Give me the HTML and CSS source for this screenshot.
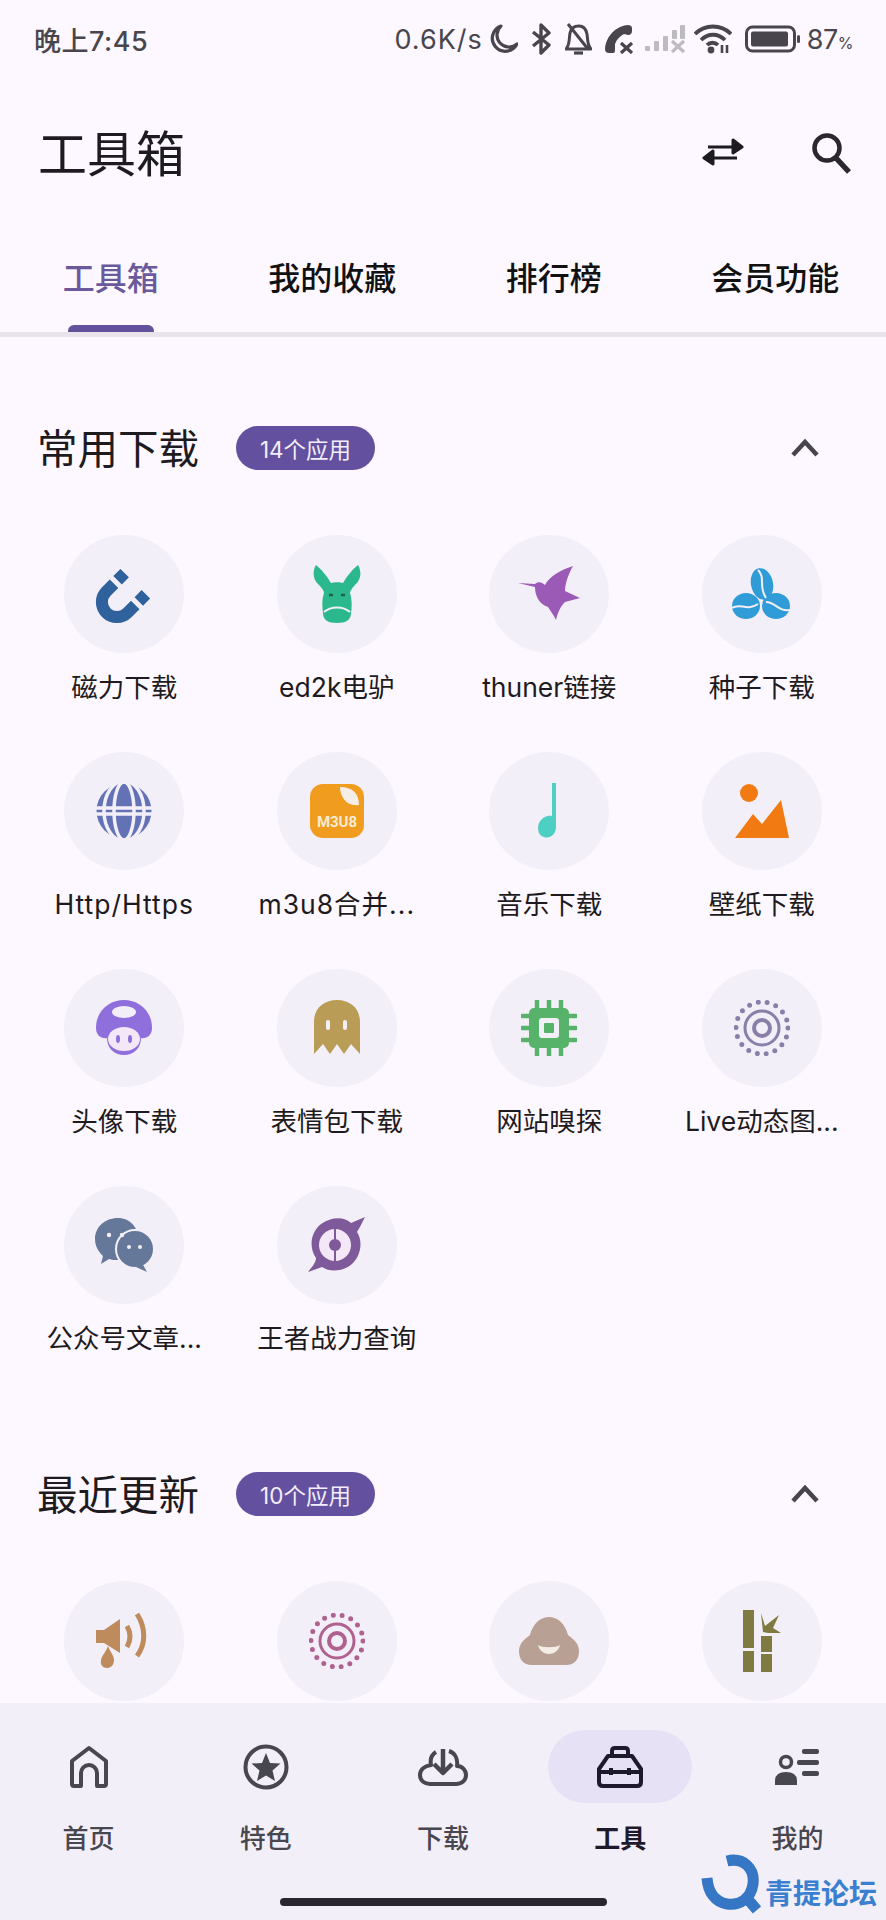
FILE: index.html
```html
<!DOCTYPE html>
<html lang="zh-CN">
<head>
  <meta charset="UTF-8" />
  <meta name="viewport" content="width=device-width, initial-scale=1.0" />
  <title>工具箱</title>
  <link rel="stylesheet" href="styles.css">
</head>
<body>
  <!-- 状态栏 -->
  <div class="status-bar">
    <span class="status-time">晚上7:45</span>
    <div class="status-right">
      <span class="status-speed">0.6K/s</span>
      <svg class="st st-moon" width="28" height="30" viewBox="0 0 28 30"><path d="M11 2A13 13 0 1 0 27 20 A12 12 0 0 1 11 2Z" fill="none" stroke="#48464c" stroke-width="3.200" stroke-linejoin="round"/></svg>
      <svg class="st st-bt" width="20" height="32" viewBox="0 0 20 32"><path d="M2 9L18 22L10 30V2L18 10L2 23" fill="none" stroke="#48464c" stroke-width="3.400" stroke-linejoin="round"/></svg>
      <svg class="st st-bell" width="27" height="32" viewBox="0 0 27 32"><path d="M1 26C5 22 4 15 5 10C6 5 10 3 14 3C18 3 21 6 22 11C23 17 22 22 26 26Z M3 1L23 26" fill="none" stroke="#48464c" stroke-width="3" stroke-linejoin="round"/><path d="M9 30H18" stroke="#48464c" stroke-width="3.200"/></svg>
      <svg class="st st-phone" width="29" height="30" viewBox="0 0 29 30"><path d="M23 1C11 2 1 12 0 25C0 28 2 29 4 29H8C10 29 10 27 10 25L10 20C12 15 15 12 19 10L23 11C26 11 27 9 27 7V4C27 2 25 1 23 1Z" fill="#48464c"/><path d="M16 19L27 29M27 19L16 29" stroke="#48464c" stroke-width="3.200"/></svg>
      <svg class="st st-signal" width="40" height="30" viewBox="0 0 40 30"><g fill="#bdbac0"><rect x="0" y="22" width="5" height="5" rx="1"/><rect x="9" y="17" width="5" height="10" rx="1"/><rect x="18" y="12" width="5" height="15" rx="1"/><rect x="27" y="6" width="5" height="9" rx="1"/><rect x="35" y="1" width="5" height="14" rx="1"/></g><path d="M27 17L39 28M39 17L27 28" stroke="#bdbac0" stroke-width="3.200"/></svg>
      <svg class="st st-wifi" width="38" height="30" viewBox="0 0 38 30"><path d="M1 10C11 0 27 0 37 10M7 16C14 9 24 9 31 16M13 21C16 18 21 18 24 21" fill="none" stroke="#48464c" stroke-width="3.800"/><circle cx="17" cy="26" r="3.400" fill="#48464c"/><path d="M28 21V29M33 21V29" stroke="#48464c" stroke-width="2.600" fill="none"/></svg>
      <svg class="st st-battery" width="55" height="28" viewBox="0 0 55 28"><rect x="1.500" y="2" width="48" height="24" rx="6" fill="none" stroke="#48464c" stroke-width="3"/><rect x="6" y="6.500" width="37" height="15" rx="2" fill="#48464c"/><rect x="52" y="10" width="3" height="8" rx="1.500" fill="#48464c"/></svg>
      <span class="status-batt">87<small>%</small></span>
    </div>
  </div>

  <!-- 标题栏 -->
  <header class="app-bar">
    <h1 class="app-title">工具箱</h1>
    <div class="app-actions">
      <svg width="44" height="40" viewBox="0 0 44 40"><path d="M8 15H32M33 8L42 15L33 21Z M37 26H14M13 19L4 26L13 32Z" fill="#1d1b20" stroke="#1d1b20" stroke-width="3" stroke-linejoin="round" transform="translate(0 -1)"/></svg>
      <svg width="42" height="44" viewBox="0 0 42 44"><circle cx="17" cy="17" r="12.500" fill="none" stroke="#2a2730" stroke-width="4.500"/><path d="M26 27L39 41" stroke="#2a2730" stroke-width="5.500"/></svg>
    </div>
  </header>

  <!-- 顶部标签 -->
  <nav class="tabs">
    <a class="tab active"><span>工具箱</span></a>
    <a class="tab"><span>我的收藏</span></a>
    <a class="tab"><span>排行榜</span></a>
    <a class="tab"><span>会员功能</span></a>
  </nav>

  <main class="content">
    <!-- 常用下载 -->
    <section class="group">
      <div class="group-head">
        <h2>常用下载</h2>
        <span class="badge">14个应用</span>
        <svg class="chevron" width="28" height="18" viewBox="0 0 28 18"><path d="M2 16L14 3L26 16" fill="none" stroke="#47454b" stroke-width="4.500"/></svg>
      </div>
      <div class="app-grid">
        <div class="app">
          <div class="app-icon">
            <svg width="60" height="60" viewBox="0 0 60 60"><g transform="translate(25 36) rotate(45)" fill="none" stroke="#2f619c" stroke-width="12"><path d="M-15 -8V3A15 15 0 0 0 15 3V-8"/><path d="M-15 -23V-13M15 -23V-13"/></g></svg>
          </div>
          <p>磁力下载</p>
        </div>
        <div class="app">
          <div class="app-icon">
            <svg width="48" height="58" viewBox="0 0 48 58"><path d="M3 0C-1 7 0 15 6 20C9 23 11 26 11 28C9 34 9 42 10 48C10 55 15 58 24 58C33 58 38 55 38 48C39 42 39 34 37 28C37 26 39 23 42 20C48 15 49 7 45 0C40 4 34 11 30 18C27 17 21 17 18 18C14 11 8 4 3 0Z" fill="#2bb88c"/><path d="M11 47C18 41 30 41 37 47" fill="none" stroke="#f3eff8" stroke-width="2"/><path d="M16 30H20M28 30H32" stroke="#1d5f4a" stroke-width="2.500"/></svg>
          </div>
          <p>ed2k电驴</p>
        </div>
        <div class="app">
          <div class="app-icon">
            <svg width="62" height="60" viewBox="0 0 62 60"><path d="M0 19L17 20C20 17 24 18 27 21C31 13 42 6 55 2C50 11 47 20 47 27L62 34L47 38C43 42 40 47 38 56C35 50 32 46 30 43C20 40 17 30 17 23Z" fill="#9a5ab5"/></svg>
          </div>
          <p>thuner链接</p>
        </div>
        <div class="app">
          <div class="app-icon">
            <svg width="60" height="60" viewBox="0 0 60 60"><g fill="#2f9cd8"><ellipse cx="30" cy="20" rx="11" ry="16" transform="rotate(-12 30 20)"/><ellipse cx="14" cy="42" rx="14" ry="13"/><ellipse cx="44" cy="42" rx="14" ry="13"/></g><path d="M26 6C34 14 26 22 34 34M0 44C8 38 14 48 26 40M34 38C44 38 46 48 58 46" fill="none" stroke="#f3eff8" stroke-width="2"/></svg>
          </div>
          <p>种子下载</p>
        </div>
        <div class="app">
          <div class="app-icon">
            <svg width="60" height="60" viewBox="0 0 60 60"><circle cx="30" cy="30" r="27.500" fill="#6272b5"/><g fill="none" stroke="#f3eff8" stroke-width="3.500"><path d="M0 27H60M0 33H60"/><ellipse cx="30" cy="30" rx="10" ry="29"/><ellipse cx="30" cy="30" rx="20" ry="30"/></g></svg>
          </div>
          <p class="wide">Http/Https</p>
        </div>
        <div class="app">
          <div class="app-icon">
            <svg width="56" height="56" viewBox="0 0 56 56"><rect x="1" y="1" width="54" height="54" rx="13" fill="#f09c1e"/><path d="M31 4C43 4 50 10 50 22C38 24 31 14 31 4Z" fill="#f5eee6"/><text class="m3u8" x="28" y="44" text-anchor="middle">M3U8</text></svg>
          </div>
          <p class="wide">m3u8合并...</p>
        </div>
        <div class="app">
          <div class="app-icon">
            <svg width="40" height="56" viewBox="0 0 40 56"><path d="M23 0H27V44C27 52 20 56 15 54C9 53 8 45 10 40C13 34 19 32 23 33Z" fill="#4dcfc4"/></svg>
          </div>
          <p>音乐下载</p>
        </div>
        <div class="app">
          <div class="app-icon">
            <svg width="56" height="56" viewBox="0 0 56 56"><ellipse cx="15" cy="10" rx="9" ry="9" fill="#f27a12"/><path d="M1 55L19 31L28 41L47 17L55 55Z" fill="#f27a12"/></svg>
          </div>
          <p>壁纸下载</p>
        </div>
        <div class="app">
          <div class="app-icon">
            <svg width="56" height="56" viewBox="0 0 56 56"><path d="M28 0C14 0 0 10 0 28C0 36 6 39 11 38C11 48 18 55 28 55C38 55 45 48 45 38C50 39 56 36 56 28C56 10 42 0 28 0Z" fill="#8e6fdc"/><ellipse cx="28" cy="12" rx="12" ry="6" fill="#f3eff8"/><ellipse cx="28" cy="39" rx="16" ry="12" fill="#f3e7f8"/><ellipse cx="22" cy="39" rx="2" ry="4" fill="#8e6fdc"/><ellipse cx="34" cy="39" rx="2" ry="4" fill="#8e6fdc"/></svg>
          </div>
          <p>头像下载</p>
        </div>
        <div class="app">
          <div class="app-icon">
            <svg width="46" height="56" viewBox="0 0 46 56"><path d="M0 54V22C0 8 10 0 23 0C36 0 46 8 46 22V54L37 44L30 54L23 44L16 54L9 44Z" fill="#b99c55"/><rect x="12" y="20" width="4" height="10" rx="2" fill="#f3eff8"/><rect x="29" y="20" width="4" height="10" rx="2" fill="#f3eff8"/></svg>
          </div>
          <p>表情包下载</p>
        </div>
        <div class="app">
          <div class="app-icon">
            <svg width="56" height="56" viewBox="0 0 56 56"><rect x="8" y="8" width="40" height="40" rx="5" fill="#58b36a"/><rect x="18" y="18" width="20" height="20" rx="3" fill="#f3eff8"/><rect x="23" y="23" width="10" height="10" rx="1" fill="#58b36a"/><path d="M16 1V8M28 1V8M40 1V8M16 48V55M28 48V55M40 48V55M1 16H8M1 28H8M1 40H8M48 16H55M48 28H55M48 40H55" stroke="#58b36a" stroke-width="4.500" stroke-linecap="round"/></svg>
          </div>
          <p>网站嗅探</p>
        </div>
        <div class="app">
          <div class="app-icon">
            <svg width="56" height="56" viewBox="0 0 56 56" fill="none" stroke="#8a7fa8"><circle cx="28" cy="28" r="26" stroke-width="5" stroke-linecap="round" stroke-dasharray="0 9.070"/><circle cx="28" cy="28" r="17" stroke-width="3"/><circle cx="28" cy="28" r="8" stroke-width="4"/></svg>
          </div>
          <p>Live动态图...</p>
        </div>
        <div class="app">
          <div class="app-icon">
            <svg width="60" height="56" viewBox="0 0 60 56"><path d="M24 1C11 1 1 10 1 22C1 30 5 35 9 39L7 47L15 42C18 43 20 43 24 43C36 43 44 33 44 22C44 10 36 1 24 1Z" fill="#66789a"/><circle cx="41" cy="32" r="19" fill="#66789a" stroke="#f3eff8" stroke-width="2"/><path d="M48 46L53 55L42 50Z" fill="#66789a"/><circle cx="15" cy="18" r="2.200" fill="#f3eff8"/><circle cx="28" cy="18" r="2.200" fill="#f3eff8"/><circle cx="35" cy="30" r="2" fill="#f3eff8"/><circle cx="46" cy="30" r="2" fill="#f3eff8"/></svg>
          </div>
          <p>公众号文章...</p>
        </div>
        <div class="app">
          <div class="app-icon">
            <svg width="60" height="56" viewBox="0 0 60 56"><path d="M58 0C54 8 52 12 50 15C56 24 54 38 46 46C38 54 24 56 15 50L1 55C6 49 9 45 9 41C2 31 3 16 14 7C25 -1 38 0 44 6Z" fill="#7f5a9a"/><circle cx="28" cy="28" r="16" fill="#f3e7f8"/><circle cx="28" cy="28" r="6" fill="#7f5a9a"/><path d="M28 12V44" stroke="#7f5a9a" stroke-width="2"/></svg>
          </div>
          <p>王者战力查询</p>
        </div>
      </div>
    </section>

    <!-- 最近更新 -->
    <section class="group">
      <div class="group-head">
        <h2>最近更新</h2>
        <span class="badge">10个应用</span>
        <svg class="chevron" width="28" height="18" viewBox="0 0 28 18"><path d="M2 16L14 3L26 16" fill="none" stroke="#47454b" stroke-width="4.500"/></svg>
      </div>
      <div class="app-grid">
        <div class="app">
          <div class="app-icon">
            <svg width="56" height="56" viewBox="0 0 56 56"><path d="M0 17H8L24 6V40L8 30H0Z" fill="#bd8b5c"/><path d="M12 33C14 39 18 42 18 47C18 53 14 55 11 55C7 55 4 52 5 47C6 42 10 39 12 33Z" fill="#bd8b5c"/><path d="M31 13C35 20 35 27 31 34M41 1C50 15 50 31 41 43" fill="none" stroke="#bd8b5c" stroke-width="5"/></svg>
          </div>
        </div>
        <div class="app">
          <div class="app-icon">
            <svg width="56" height="56" viewBox="0 0 56 56" fill="none" stroke="#b0628f"><circle cx="28" cy="28" r="26" stroke-width="5" stroke-linecap="round" stroke-dasharray="0 9.070"/><circle cx="28" cy="28" r="17" stroke-width="3"/><circle cx="28" cy="28" r="8" stroke-width="4"/></svg>
          </div>
        </div>
        <div class="app">
          <div class="app-icon">
            <svg width="60" height="48" viewBox="0 0 60 48"><path d="M13 48C4 48 0 42 0 34C0 26 6 22 11 18C14 6 22 0 30 0C38 0 46 6 49 18C54 22 60 26 60 34C60 42 56 48 47 48Z" fill="#b9a094"/><path d="M19 28C22 40 38 40 41 28C37 31 23 31 19 28Z" fill="#f5eee6"/></svg>
          </div>
        </div>
        <div class="app">
          <div class="app-icon">
            <svg width="38" height="62" viewBox="0 0 38 62"><g fill="#7f7a3f"><rect x="0" y="0" width="11" height="38"/><rect x="0" y="41" width="11" height="21"/><rect x="18" y="26" width="11" height="16"/><rect x="18" y="44" width="11" height="18"/><path d="M18 3L22 16L36 5L30 18L38 23L25 23L20 22Z"/></g></svg>
          </div>
        </div>
      </div>
    </section>
  </main>

  <!-- 底部导航 -->
  <footer class="bottom-nav">
    <div class="nav-row">
      <a class="nav-item">
        <span class="nav-pill"><svg width="50" height="50" viewBox="0 0 50 50" fill="none" stroke="#48464f" stroke-width="4" stroke-linejoin="round"><path d="M8 19L25 6L42 19V42Q42 44 40 44H33V31A8 8 0 0 0 17 31V44H10Q8 44 8 42Z"/></svg></span>
        <span class="nav-label">首页</span>
      </a>
      <a class="nav-item">
        <span class="nav-pill"><svg width="50" height="50" viewBox="0 0 50 50"><circle cx="25" cy="25" r="20.500" fill="none" stroke="#48464f" stroke-width="4"/><path d="M25 11L29 21L39.500 21.500L31.500 28.500L34 39L25 33.500L16 39L18.500 28.500L10.500 21.500L21 21Z" fill="#48464f"/></svg></span>
        <span class="nav-label">特色</span>
      </a>
      <a class="nav-item">
        <span class="nav-pill"><svg width="52" height="50" viewBox="0 0 52 50" fill="none" stroke="#48464f" stroke-width="4" stroke-linejoin="round"><path d="M19 10C14 13 13 18 14 23C7 24 3 28 3 33C3 39 8 42 13 42H39C45 42 49 38 49 33C49 28 45 24 40 24C41 17 38 11 32 9"/><path d="M26 7V30M17 22L26 31L35 22" stroke-width="4.500"/></svg></span>
        <span class="nav-label">下载</span>
      </a>
      <a class="nav-item active">
        <span class="nav-pill"><svg width="50" height="50" viewBox="0 0 50 50" fill="none" stroke="#1d1a2b" stroke-width="4" stroke-linejoin="round"><path d="M17 14V9Q17 6 20 6H30Q33 6 33 9V14"/><path d="M13 14H37L46 27V40Q46 44 42 44H8Q4 44 4 40V27Z"/><path d="M4 30H46M16 26V33M34 26V33"/></svg></span>
        <span class="nav-label">工具</span>
      </a>
      <a class="nav-item">
        <span class="nav-pill"><svg width="50" height="50" viewBox="0 0 50 50" fill="#48464f"><circle cx="14" cy="20" r="5.500" fill="none" stroke="#48464f" stroke-width="3.500"/><path d="M3 43V39Q3 30 14 30Q25 30 25 39V43Z"/><rect x="30" y="7" width="17" height="5" rx="2"/><rect x="25" y="18" width="22" height="5" rx="2"/><rect x="30" y="29" width="17" height="5" rx="2"/></svg></span>
        <span class="nav-label">我的</span>
      </a>
    </div>
    <div class="home-bar"></div>

    <!-- 水印 -->
    <div class="watermark">
      <svg width="60" height="60" viewBox="0 0 60 60" fill="none" stroke="#3577c4" stroke-width="11"><path d="M26 7C42 3 54 14 52 30C50 45 38 52 26 50C14 48 7 38 6 24"/><path d="M44 42L56 56"/></svg>
      <span>青提论坛</span>
    </div>
  </footer>
</body>
</html>
```

FILE: styles.css
```css
/* 初始化样式 */
* {
  margin: 0;
  padding: 0;
  box-sizing: border-box;
}

body {
  width: 886px;
  height: 1920px;
  overflow: hidden;
  display: flex;
  flex-direction: column;
  font-family: Inter, "Noto Sans CJK SC", sans-serif;
  background-color: #fdf7ff;
  color: #1d1b20;
}

svg {
  display: block;
  flex: none;
}

/* 状态栏 */
.status-bar {
  height: 80px;
  padding: 0 33px 2px 34px;
  display: flex;
  align-items: center;
  justify-content: space-between;
  color: #48464c;
  font-size: 27px;
}

.status-time {
  font-weight: 500;
  letter-spacing: 0.5px;
}

.status-right {
  display: flex;
  align-items: center;
}

.status-speed {
  margin-right: 7px;
  letter-spacing: 1px;
}

.st-bt { margin-left: 13px; }
.st-bell { margin-left: 14px; }
.st-phone { margin-left: 13px; }
.st-signal { margin-left: 11px; }
.st-wifi { margin-left: 9px; }
.st-battery { margin-left: 13px; }

.status-batt {
  margin-left: 7px;
  letter-spacing: -0.5px;
}

.status-batt small {
  font-size: 16px;
}

/* 标题栏 */
.app-bar {
  height: 146px;
  padding: 0 34px 0 38px;
  display: flex;
  align-items: center;
  justify-content: space-between;
}

.app-title {
  margin-bottom: 6px;
  font-size: 49px;
  font-weight: 400;
}

.app-actions {
  display: flex;
  align-items: center;
  gap: 66px;
}

/* 顶部标签 */
.tabs {
  height: 111px;
  display: flex;
  border-bottom: 5px solid #e8e4ea;
}

.tab {
  flex: 1;
  display: flex;
  justify-content: center;
  padding-top: 27px;
  font-size: 32px;
  font-weight: 500;
  color: #111;
  position: relative;
}

.tab.active {
  color: #6a5a9c;
}

.tab.active::after {
  content: "";
  position: absolute;
  left: 68px;
  bottom: 0;
  width: 86px;
  height: 7px;
  border-radius: 6px 6px 0 0;
  background-color: #63519c;
}

/* 内容区 */
.content {
  flex: 1;
  overflow: hidden;
  padding: 89px 18px 0;
}

.group + .group {
  margin-top: 116px;
}

.group-head {
  height: 44px;
  padding-left: 19px;
  display: flex;
  align-items: center;
}

.group-head h2 {
  margin-bottom: 4px;
  font-size: 40.500px;
  font-weight: 400;
}

.badge {
  margin-left: 37px;
  width: 139px;
  height: 44px;
  border-radius: 22px;
  background-color: #63509f;
  color: #f4eefa;
  font-size: 22.500px;
  display: flex;
  align-items: center;
  justify-content: center;
}

.chevron {
  margin-left: auto;
  margin-right: 49px;
}

.app-grid {
  margin-top: 65px;
  display: grid;
  grid-template-columns: repeat(4, 1fr);
  row-gap: 47px;
}

.app {
  height: 170px;
  display: flex;
  flex-direction: column;
  align-items: center;
}

.app-icon {
  width: 120px;
  height: 120px;
  border-radius: 50%;
  background-color: #f3eff8;
  display: flex;
  align-items: center;
  justify-content: center;
}

.app p {
  margin-top: 16px;
  line-height: 36px;
  font-size: 26.500px;
  color: #1d1b20;
  white-space: nowrap;
}

.app p.wide {
  letter-spacing: 1px;
}

.m3u8 {
  font-family: Roboto, sans-serif;
  font-size: 15px;
  font-weight: 700;
  fill: #f9ecd4;
}

/* 底部导航 */
.bottom-nav {
  height: 217px;
  flex: none;
  padding-top: 27px;
  background-color: #f3eff8;
  position: relative;
}

.nav-row {
  display: flex;
}

.nav-item {
  flex: 1;
  display: flex;
  flex-direction: column;
  align-items: center;
}

.nav-pill {
  width: 144px;
  height: 73px;
  border-radius: 37px;
  display: flex;
  align-items: center;
  justify-content: center;
}

.nav-item.active .nav-pill {
  background-color: #e7e1f6;
}

.nav-label {
  margin-top: 18px;
  line-height: 36px;
  font-size: 26px;
  font-weight: 500;
  color: #48464f;
}

.nav-item.active .nav-label {
  color: #1d1a2b;
  font-weight: 700;
}

.home-bar {
  width: 327px;
  height: 8px;
  margin: 41px auto 0;
  border-radius: 4px;
  background-color: #2a2630;
}

/* 水印盖在导航上 */
.watermark {
  position: absolute;
  left: 701px;
  bottom: 6px;
  display: flex;
  align-items: flex-end;
  gap: 4px;
  color: #3a7fd0;
  font-size: 28px;
  font-weight: 700;
  line-height: 40px;
}
```
